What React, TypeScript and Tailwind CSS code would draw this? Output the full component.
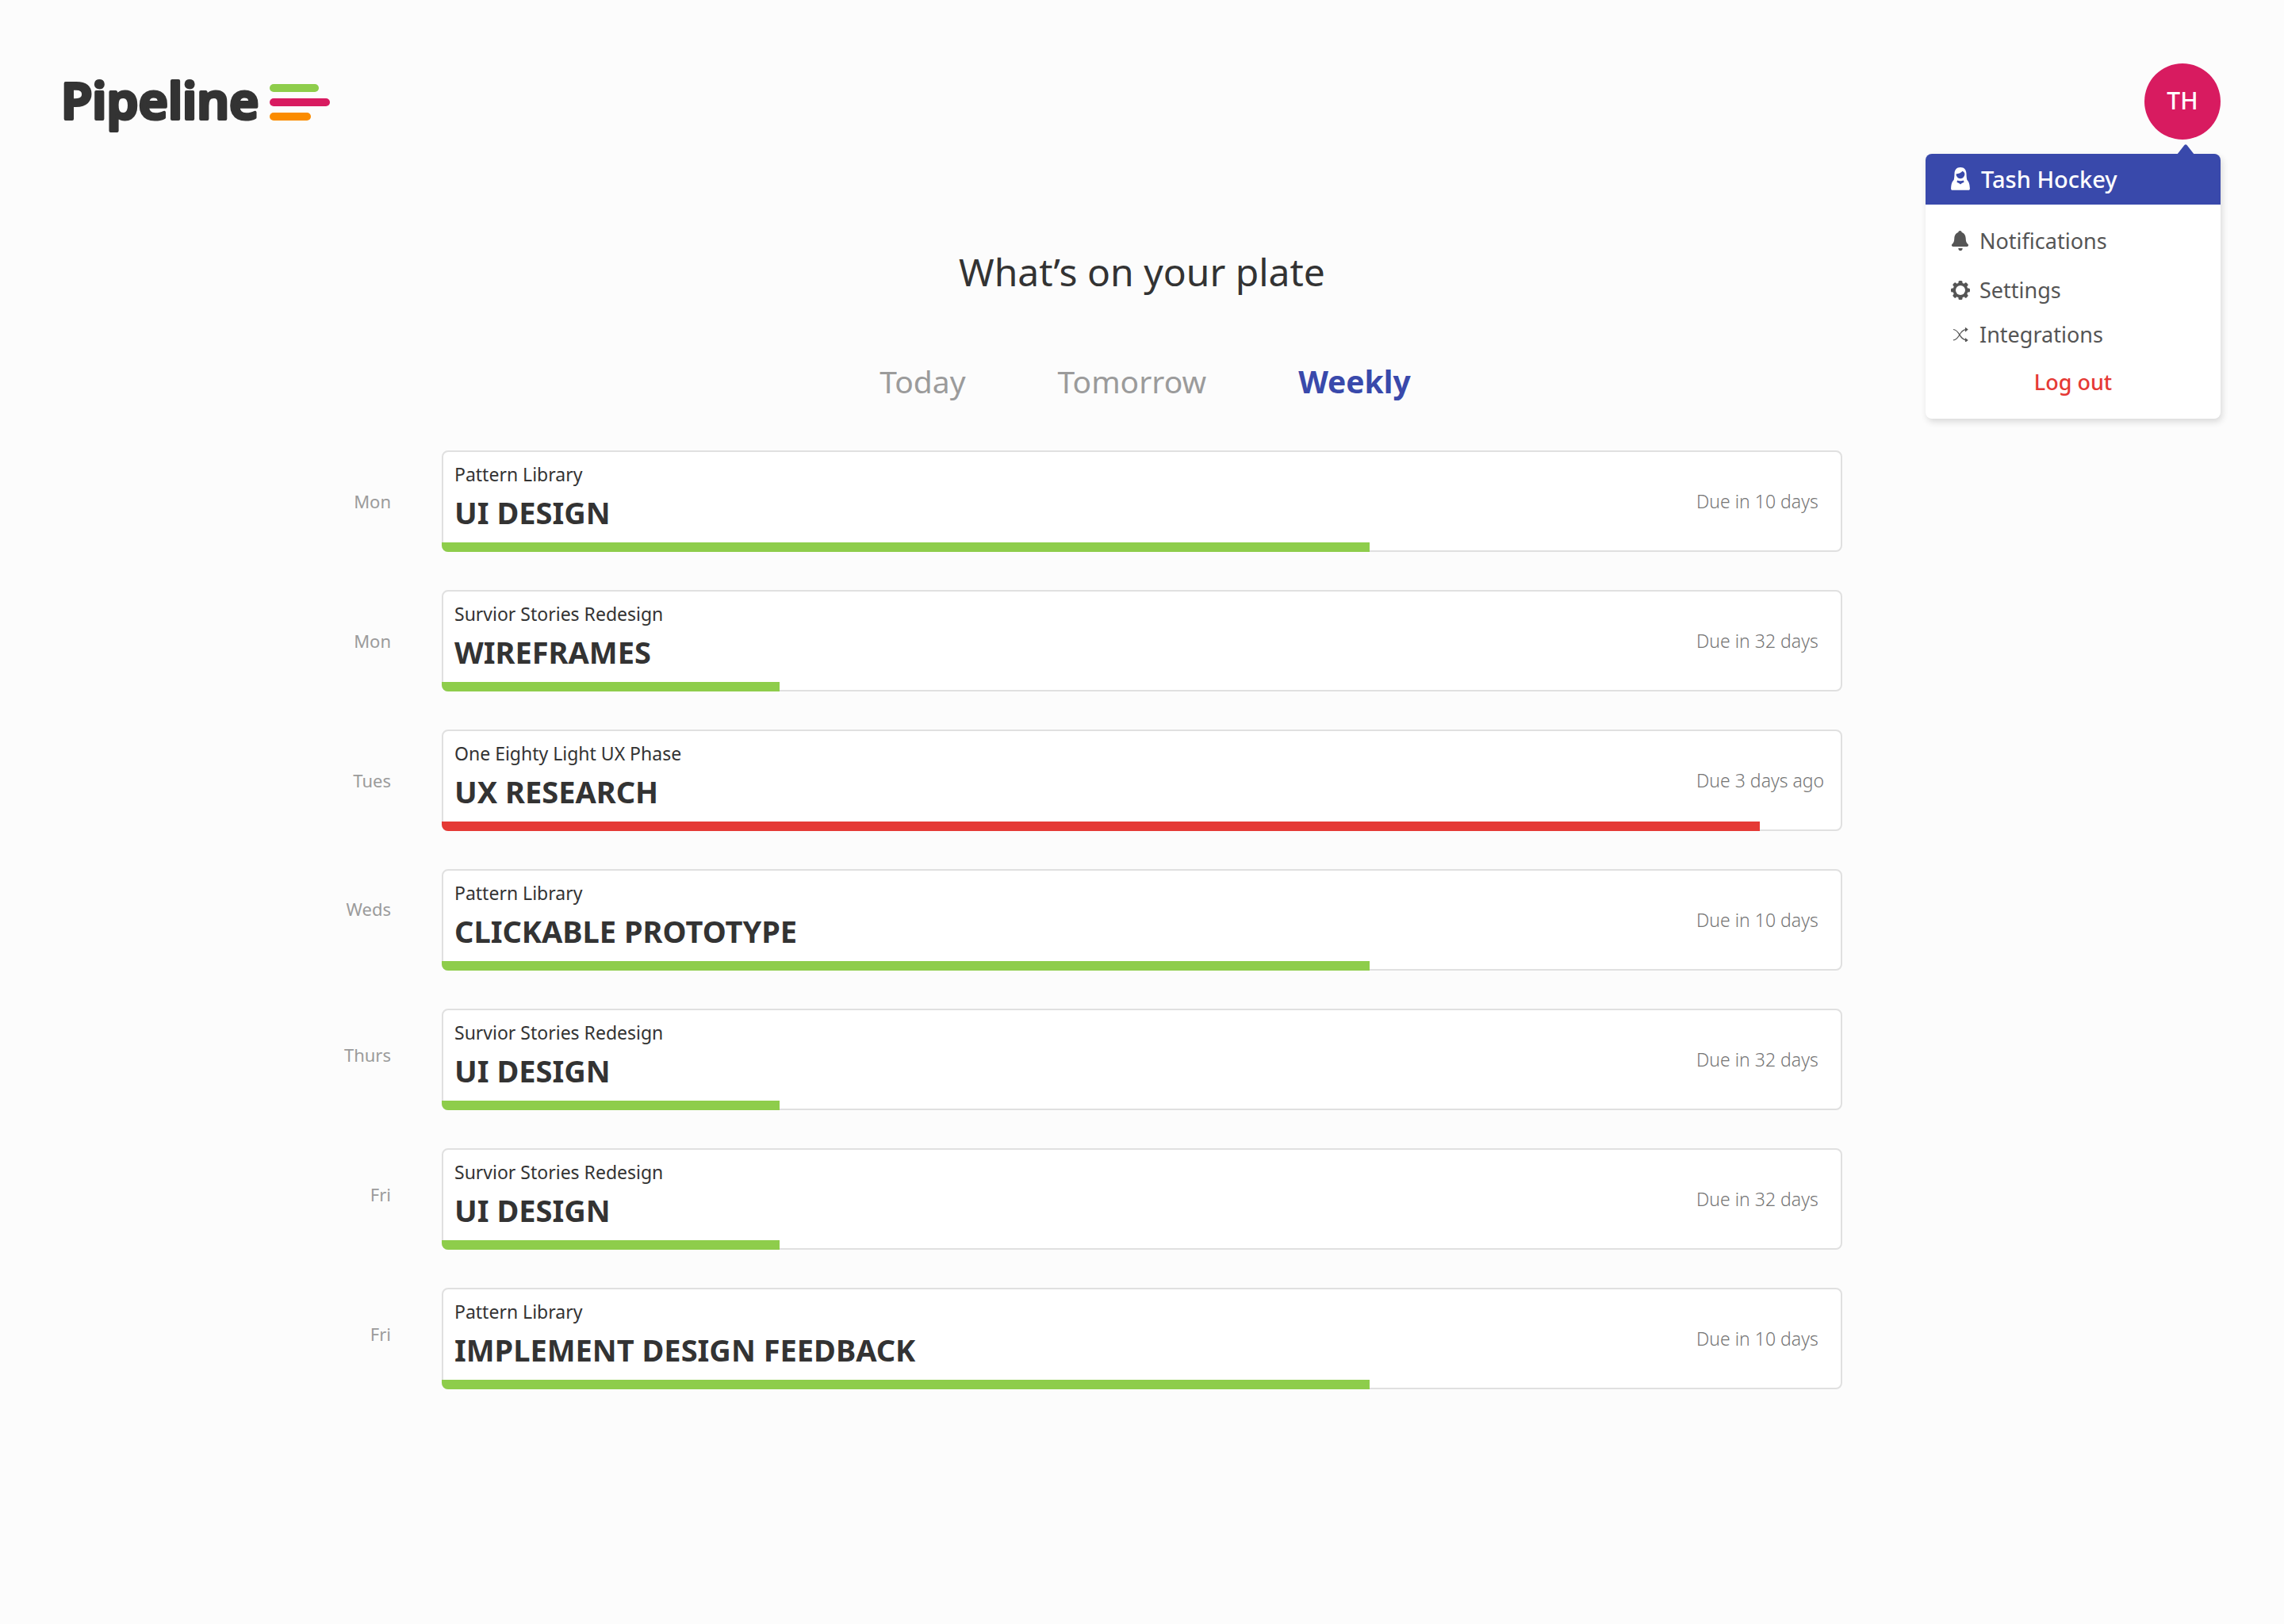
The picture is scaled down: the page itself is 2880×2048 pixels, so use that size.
type Task = {
  day: string;
  dayClass: string;
  project: string;
  title: string;
  due: string;
  progress: number;
  late?: boolean;
};

const tasks: Task[] = [
  { day: "Mon", dayClass: "", project: "Pattern Library", title: "UI DESIGN", due: "Due in 10 days", progress: 66.4 },
  { day: "Mon", dayClass: "", project: "Survior Stories Redesign", title: "WIREFRAMES", due: "Due in 32 days", progress: 24.2 },
  { day: "Tues", dayClass: "", project: "One Eighty Light UX Phase", title: "UX RESEARCH", due: "Due 3 days ago", progress: 94.3, late: true },
  { day: "Weds", dayClass: "pb-7", project: "Pattern Library", title: "CLICKABLE PROTOTYPE", due: "Due in 10 days", progress: 66.4 },
  { day: "Thurs", dayClass: "pb-3", project: "Survior Stories Redesign", title: "UI DESIGN", due: "Due in 32 days", progress: 24.2 },
  { day: "Fri", dayClass: "pb-3", project: "Survior Stories Redesign", title: "UI DESIGN", due: "Due in 32 days", progress: 24.2 },
  { day: "Fri", dayClass: "pb-3", project: "Pattern Library", title: "IMPLEMENT DESIGN FEEDBACK", due: "Due in 10 days", progress: 66.4 },
];

function Logo() {
  return (
    <svg width="340" height="96" viewBox="0 -20 340 96" className="overflow-visible" role="img" aria-label="Pipeline">
      <text
        x="-3"
        y="50"
        fontFamily="'Noto Sans', sans-serif"
        fontWeight="600"
        fontSize="64"
        fill="#333"
        stroke="#333"
        strokeWidth="4"
        strokeLinejoin="round"
      >
        Pipeline
      </text>
      <rect x="260" y="6" width="62" height="10" rx="5" fill="#8ecd4b" />
      <rect x="260" y="24" width="76" height="10" rx="5" fill="#d81b60" />
      <rect x="260" y="42" width="52" height="10" rx="5" fill="#fb8c00" />
    </svg>
  );
}

function PersonIcon() {
  return (
    <svg width="24" height="30" viewBox="0 0 24 30" aria-hidden="true">
      <path
        fill="#fff"
        fillRule="evenodd"
        d="M12 0C7 0 4.600 3.400 4.500 8c-.1 3.500-.3 5.800-.9 8C1.600 18 .4 20.500.1 26.500c-.1 1.500.5 2.300 1.900 2.300h20c1.400 0 2-.8 1.900-2.300-.3-6-1.500-8.500-3.500-10.500-.6-2.200-.8-4.500-.9-8C19.400 3.400 17 0 12 0ZM6.500 8.500c2.600-.2 6.200-1.400 8.100-3.700 1.600.7 2.700 2.200 2.800 3.700-.1 3-2.400 5.700-5.400 5.700S6.600 11.500 6.500 8.500ZM8 16.400c2.300 1.100 5.700 1.100 8 0l.5 2.500c-1.200.3-3 1.100-4.500 2.600-1.500-1.500-3.300-2.300-4.500-2.600Z"
      />
    </svg>
  );
}

function BellIcon() {
  return (
    <svg width="24" height="26" viewBox="0 0 24 26" aria-hidden="true" fill="#555">
      <path d="M11.500 0c-1.300 0-2.100.8-2.200 1.900C5.800 3 4.500 6 4.300 9.500c-.2 4.200-.8 5.500-2.700 7.300C.4 18 .8 20 2.600 20h17.800c1.800 0 2.200-2 1-3.200-1.900-1.800-2.500-3.100-2.700-7.300C18.500 6 17.200 3 13.700 1.900 13.600.8 12.800 0 11.500 0Z" />
      <path d="M9.300 22h5.400c0 2-1 3.200-2.700 3.200S9.300 24 9.300 22Z" />
    </svg>
  );
}

function GearIcon() {
  return (
    <svg width="24" height="24" viewBox="0 0 24 24" aria-hidden="true">
      <g fill="#555">
        <rect x="9.500" y="0" width="5" height="24" rx="1.500" />
        <rect x="9.500" y="0" width="5" height="24" rx="1.500" transform="rotate(45 12 12)" />
        <rect x="9.500" y="0" width="5" height="24" rx="1.500" transform="rotate(90 12 12)" />
        <rect x="9.500" y="0" width="5" height="24" rx="1.500" transform="rotate(135 12 12)" />
        <circle cx="12" cy="12" r="9.500" />
      </g>
      <circle cx="12" cy="12" r="6" fill="#fff" />
    </svg>
  );
}

function ShuffleIcon() {
  return (
    <svg width="24" height="18" viewBox="0 0 24 18" aria-hidden="true" fill="none" stroke="#555" strokeWidth="1.200">
      <path d="M3 2.500c8 0 7.500 13.300 16.500 13.300M3 15.800C11 15.800 10.500 2.500 19.500 2.500" />
      <path d="M18.500.8l2.300 1.700-2.300 1.900zM18.500 14.200l2.300 1.700-2.300 1.800z" fill="#555" />
    </svg>
  );
}

function UserMenu() {
  return (
    <div className="relative">
      <button
        type="button"
        aria-haspopup="menu"
        aria-expanded="true"
        className="flex size-24 items-center justify-center rounded-full bg-[#d81b60] pb-1 text-[30px] font-medium text-white"
      >
        TH
      </button>
      <div className="absolute top-full right-0 z-10 pt-[18px]">
        <svg width="24" height="14" viewBox="0 0 24 14" className="absolute top-1.5 right-8" aria-hidden="true">
          <path d="M1 13 10 1.500q2-2.500 4 0L23 13v1H1z" fill="#3949ab" />
        </svg>
        <nav
          aria-label="Account"
          className="w-[372px] overflow-hidden rounded-lg bg-white pb-[18px] text-[27px] text-[#555] shadow-[2px_4px_8px_rgba(0,0,0,0.14)]"
        >
          <a href="#profile" className="flex h-16 items-center gap-3.5 bg-[#3949ab] px-8 text-[29px] font-medium text-white">
            <PersonIcon />
            Tash Hockey
          </a>
          <a href="#notifications" className="mt-[18px] flex h-14 items-center gap-3 px-8">
            <BellIcon />
            Notifications
          </a>
          <a href="#settings" className="mt-1.5 flex h-14 items-center gap-3 px-8">
            <GearIcon />
            Settings
          </a>
          <a href="#integrations" className="flex h-14 items-center gap-3 px-8">
            <ShuffleIcon />
            Integrations
          </a>
          <button type="button" className="mt-1 flex h-14 w-full items-center justify-center font-medium text-[#e53935]">
            Log out
          </button>
        </nav>
      </div>
    </div>
  );
}

function TaskRow({ task }: { task: Task }) {
  return (
    <li className="grid grid-cols-[minmax(120px,1fr)_minmax(0,1766px)_minmax(0,1fr)] items-center gap-x-16">
      <span className={"justify-self-end text-[22px] text-[#9b9b9b] " + task.dayClass}>{task.day}</span>
      <article className="relative flex h-32 items-center justify-between rounded-lg border-2 border-[#e0e0e0] bg-white pl-3.5">
        <div className="self-start pt-3">
          <p className="text-[23px] leading-8 text-[#333]">{task.project}</p>
          <h2 className="pt-2 text-[38px] leading-[48px] font-bold text-[#333]">{task.title}</h2>
        </div>
        <p className="w-[182px] text-[23px] font-light whitespace-nowrap text-[#757575]">{task.due}</p>
        <div
          role="progressbar"
          aria-label={task.title}
          aria-valuenow={task.progress}
          aria-valuemin={0}
          aria-valuemax={100}
          className={"absolute -bottom-0.5 -left-0.5 h-3 rounded-bl-lg " + (task.late ? "bg-[#e53935]" : "bg-[#8ecd4b]")}
          style={{ width: `${task.progress}%` }}
        />
      </article>
    </li>
  );
}

export default function App() {
  return (
    <div className="min-h-screen bg-[#fcfcfc] pb-20 font-['Noto_Sans',sans-serif]">
      <header className="flex items-start justify-between px-20 pt-20">
        <a href="#home">
          <Logo />
        </a>
        <UserMenu />
      </header>
      <main>
        <h1 className="mt-[135px] text-center text-[48px] leading-[64px] text-[#333]">What’s on your plate</h1>
        <div role="tablist" aria-label="Period" className="mt-[78px] flex justify-center gap-[116px] pl-2 text-[39px] leading-[56px] text-[#9b9b9b]">
          <button type="button" role="tab" aria-selected="false">Today</button>
          <button type="button" role="tab" aria-selected="false">Tomorrow</button>
          <button type="button" role="tab" aria-selected="true" className="font-bold text-[#3949ab]">Weekly</button>
        </div>
        <ul className="mt-[59px] flex flex-col gap-12">
          {tasks.map((task, i) => (
            <TaskRow key={i} task={task} />
          ))}
        </ul>
      </main>
    </div>
  );
}
